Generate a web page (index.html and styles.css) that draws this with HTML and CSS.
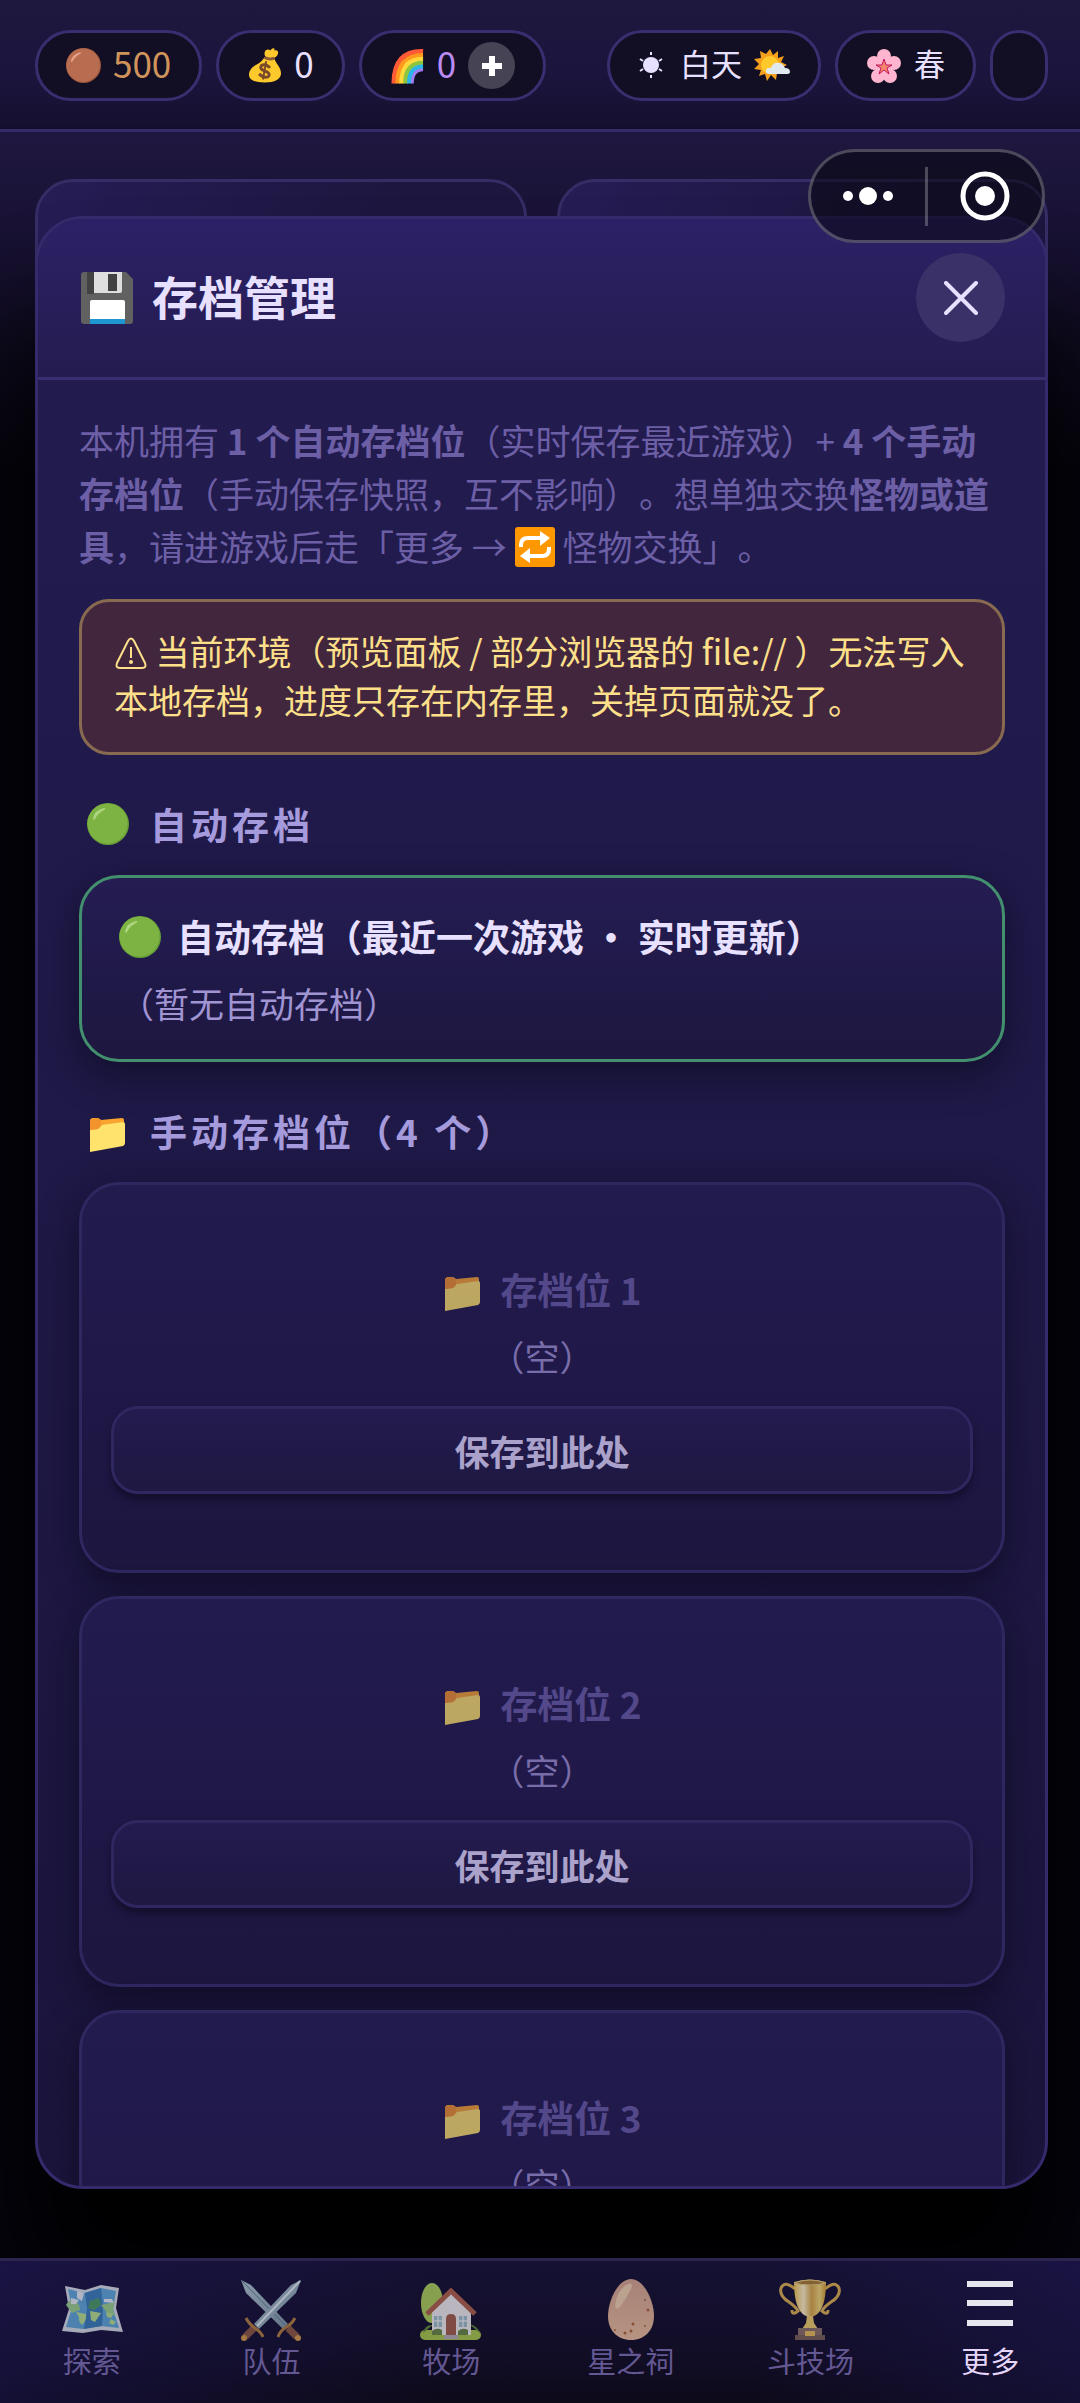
FILE: index.html
```html
<!DOCTYPE html>
<html lang="zh-CN">
<head>
    <meta charset="UTF-8">
    <meta name="viewport" content="width=device-width, initial-scale=1">
    <title>存档管理</title>
    <link rel="stylesheet" href="styles.css">
</head>
<body>
    <!-- Shared icons -->
    <svg class="icon-defs" aria-hidden="true">
        <defs>
            <linearGradient id="swordBlade" x1="0" y1="0" x2="1" y2="1">
                <stop offset="0" stop-color="#b4cad4"/>
                <stop offset="1" stop-color="#7e99a6"/>
            </linearGradient>
            <linearGradient id="cupGold" x1="0" y1="0" x2="1" y2="0">
                <stop offset="0" stop-color="#f0c552"/>
                <stop offset="0.3" stop-color="#fff3c8"/>
                <stop offset="0.55" stop-color="#d8a848"/>
                <stop offset="0.8" stop-color="#f2d878"/>
                <stop offset="1" stop-color="#d8a030"/>
            </linearGradient>
            <linearGradient id="eggShell" x1="0" y1="0" x2="0" y2="1">
                <stop offset="0" stop-color="#d8a890"/>
                <stop offset="1" stop-color="#eec0a0"/>
            </linearGradient>
            <symbol id="icon-folder" viewBox="0 0 42 42">
                <path d="M3 39V11q0-2 2-3h6l3 2 21-2q2 0 2 2v6L8 38z" fill="#f9a52f"/>
                <path d="M3 42V20l8-1 4-4 21-3q2 0 2 2v19q0 2-2 3z" fill="#ffe36c"/>
                <path d="M3 20v-9q0-2 1-2l7-1 3 2v6l-3 3z" fill="#f2932c"/>
            </symbol>
            <symbol id="icon-green" viewBox="0 0 42 42">
                <circle cx="21" cy="21" r="21" fill="#689f38"/>
                <circle cx="20.500" cy="20.500" r="20" fill="#7cb342"/>
                <path d="M6 15Q8 7 17 5q3 0 0 2-6 3-9 9-2 2-2-1z" fill="#aed581"/>
            </symbol>
        </defs>
    </svg>

    <div class="app">
        <header class="topbar">
            <div class="pill-group">
                <div class="pill coin">
                    <svg width="35" height="35" viewBox="0 0 42 42">
                        <circle cx="21" cy="21" r="21" fill="#a1583f"/>
                        <circle cx="20.500" cy="20.500" r="20" fill="#b96d50"/>
                        <path d="M6 15Q8 7 17 5q3 0 0 2-6 3-9 9-2 2-2-1z" fill="#e8a088"/>
                    </svg>
                    <span>500</span>
                </div>
                <div class="pill">
                    <svg width="35" height="36" viewBox="0 0 36 36">
                        <path d="M19 9q-2-4 0-7 3-2 5 0 2-3 4-2 1 0 0 2 4-1 4 2 0 4-5 6z" fill="#fdc92c"/>
                        <path d="M18 9q5-2 10 1 1 3 3 6 4 5 4 10-1 9-17 9T2 27q0-6 7-10 6-3 9-8z" fill="#fdc92c"/>
                        <path d="M18 9q5 3 10 1" stroke="#8a5a3a" stroke-width="3" fill="none"/>
                        <g transform="rotate(10 18 23)" fill="none" stroke="#7a4a2b">
                            <path d="M23 19q-5-4-9-1-2 4 4 5 7 1 5 5-4 3-10-1" stroke-width="3"/>
                            <path d="M18 13v19" stroke-width="2"/>
                        </g>
                    </svg>
                    <span>0</span>
                </div>
                <div class="pill gem">
                    <svg width="35" height="36" viewBox="0 0 36 36">
                        <g fill="none" stroke-width="5">
                            <path d="M4 36Q4 2 34 3" stroke="#ff5a36"/>
                            <path d="M8 36Q8 7 34 7" stroke="#ff9a1f"/>
                            <path d="M12 36Q12 11 34 11" stroke="#ffd93b"/>
                            <path d="M16 36Q16 15 34 15" stroke="#8cc63f"/>
                            <path d="M20 36Q20 19 34 19" stroke="#2bb5e8"/>
                            <path d="M23 36Q23 22 34 22" stroke="#a07cf0" stroke-width="3"/>
                        </g>
                    </svg>
                    <span>0</span>
                    <button type="button" class="add-btn" aria-label="添加">
                        <svg width="20" height="20" viewBox="0 0 20 20"><path d="M10 0v20M0 10h20" stroke="#fff" stroke-width="6"/></svg>
                    </button>
                </div>
            </div>
            <div class="pill-group status">
                <div class="pill">
                    <svg width="30" height="30" viewBox="0 0 30 30">
                        <circle cx="13" cy="14" r="8" fill="#e8e0ff"/>
                        <path d="M13 1v3M13 24v3M2 8l3 2M21 18l3 2M24 8l-3 2M5 18l-3 2" stroke="#e8e0ff" stroke-width="2"/>
                    </svg>
                    <span>白天</span>
                    <svg width="36" height="36" viewBox="0 0 36 36">
                        <path d="M16 1l3 6 5-4v7l6-2-3 6 6 3-6 3 3 6-7-1-1 7-5-5-4 6-2-7-6 2 2-6-7-1 5-5-5-5 7-1-1-7 6 3z" fill="#f5a01d"/>
                        <circle cx="16" cy="17" r="9" fill="#ffc92c"/>
                        <path d="M16 26q-5 0-4-4 1-3 5-2 2-6 8-5 4 0 6 5 5 0 5 4 0 2-4 2z" fill="#dfe9ef"/>
                    </svg>
                </div>
                <div class="pill">
                    <svg width="36" height="36" viewBox="0 0 36 36">
                        <g fill="#ffb4cf">
                            <circle cx="18" cy="8" r="7"/>
                            <circle cx="28" cy="15" r="7"/>
                            <circle cx="24" cy="28" r="7"/>
                            <circle cx="12" cy="28" r="7"/>
                            <circle cx="8" cy="15" r="7"/>
                            <circle cx="18" cy="19" r="9"/>
                        </g>
                        <path d="M18 11l2 6 6 0-5 3 2 6-5-4-5 4 2-6-5-3 6 0z" fill="#f5876e" stroke="#c2185b" stroke-width="1"/>
                    </svg>
                    <span>春</span>
                </div>
                <div class="pill pill-empty"></div>
            </div>
        </header>

        <main class="stage">
            <div class="back-cards">
                <div class="back-card"></div>
                <div class="back-card"></div>
            </div>

            <section class="modal" role="dialog" aria-labelledby="modalTitle">
                <div class="modal-header">
                    <h1 class="modal-title" id="modalTitle">
                        <svg width="54" height="54" viewBox="0 0 54 54">
                            <path d="M4 1h42l7 7v42q0 3-3 3H4q-3 0-3-3V4q0-3 3-3z" fill="#616161"/>
                            <path d="M7 1h7v22H7z" fill="#424242"/>
                            <path d="M14 1h28v19q0 2-2 2H14z" fill="#dedede"/>
                            <path d="M28 3h9v17h-9z" fill="#424242"/>
                            <path d="M10 53V31q0-2 2-2h31q2 0 2 2v22z" fill="#fff"/>
                            <path d="M10 48h35v5H10z" fill="#1e96d2"/>
                        </svg>
                        <span>存档管理</span>
                    </h1>
                    <button type="button" class="close-btn" aria-label="关闭">
                        <svg width="34" height="34" viewBox="0 0 34 34"><path d="M2 2l30 30M32 2L2 32" stroke="#e8e0ff" stroke-width="4" stroke-linecap="round"/></svg>
                    </button>
                </div>

                <div class="modal-body">
                    <p class="intro">本机拥有 <b>1 个自动存档位</b>（实时保存最近游戏）+ <b>4 个手动存档位</b>（手动保存快照，互不影响）。想单独交换<b>怪物或道具</b>，请进游戏后走「更多 → <svg class="inline-icon" width="40" height="40" viewBox="0 0 40 40"><rect width="40" height="40" rx="3" fill="#ff9800"/><path d="M6 20v-2q0-7 7-7h14M34 20v2q0 7-7 7H13" stroke="#fff" stroke-width="4" fill="none"/><path d="M25 4l10 7-10 8zM15 21L5 29l10 7z" fill="#fff"/></svg> 怪物交换」。</p>

                    <div class="warning">
                        <svg class="inline-icon" width="34" height="34" viewBox="0 0 34 34"><path d="M14 4q3-5 6 0l11 22q2 5-3 5H6q-5 0-3-5z" fill="none" stroke="#ffe08a" stroke-width="2"/><path d="M17 10v11" stroke="#ffe08a" stroke-width="2"/><circle cx="17" cy="25" r="2" fill="#ffe08a"/></svg> 当前环境（预览面板 / 部分浏览器的 file:// ）无法写入本地存档，进度只存在内存里，关掉页面就没了。
                    </div>

                    <h2 class="section-title">
                        <svg width="42" height="42"><use href="#icon-green"/></svg>
                        <span>自动存档</span>
                    </h2>
                    <div class="card auto-card">
                        <h3 class="card-title">
                            <svg width="42" height="42"><use href="#icon-green"/></svg>
                            <span>自动存档（最近一次游戏 · 实时更新）</span>
                        </h3>
                        <p class="card-meta">（暂无自动存档）</p>
                    </div>

                    <h2 class="section-title">
                        <svg width="42" height="42"><use href="#icon-folder"/></svg>
                        <span>手动存档位（4 个）</span>
                    </h2>
                    <div class="slot-list">
                        <div class="card slot">
                            <h3 class="card-title">
                                <svg width="42" height="42"><use href="#icon-folder"/></svg>
                                <span>存档位 1</span>
                            </h3>
                            <p class="card-meta">（空）</p>
                            <button type="button" class="save-btn">保存到此处</button>
                        </div>
                        <div class="card slot">
                            <h3 class="card-title">
                                <svg width="42" height="42"><use href="#icon-folder"/></svg>
                                <span>存档位 2</span>
                            </h3>
                            <p class="card-meta">（空）</p>
                            <button type="button" class="save-btn">保存到此处</button>
                        </div>
                        <div class="card slot">
                            <h3 class="card-title">
                                <svg width="42" height="42"><use href="#icon-folder"/></svg>
                                <span>存档位 3</span>
                            </h3>
                            <p class="card-meta">（空）</p>
                            <button type="button" class="save-btn">保存到此处</button>
                        </div>
                    </div>
                </div>
            </section>
        </main>

        <nav class="tabbar">
            <a href="#" class="tab">
                <svg width="62" height="62" viewBox="0 0 62 62">
                    <path d="M4 7l20 4 16-5 18 3-3 20 7 24-22-2-18 3-21-2 7-22z" fill="#d7dde3"/>
                    <path d="M7 10l16 4 17-5 15 3-3 18 6 19-18-2-18 3-17-2 6-19z" fill="#5fa8d8"/>
                    <path d="M24 14l16-5 2 20-1 18-18 3 3-20z" fill="#3b7fb8"/>
                    <path d="M5 26q4-7 10-4 4 4 4 9l-8 3zM40 26l14-3-2 8 2 6-8-3z" fill="#9bd18b"/>
                    <path d="M15 33l10 2q1 6-4 11-4-4-3-8zM29 32l11 2-6 9-4-2zM45 33l7 2-2 4-4-1zM50 40l5 3-3 3-4-2z" fill="#b9e08c"/>
                    <path d="M29 22l9-3 2 7-7 5-6-2z" fill="#4c9d65"/>
                    <path d="M16 12l7 2-2 8-5-3zM10 19l8 2-3 4-5 0zM43 20l8 0 2 4-10-1z" fill="#e3edf2"/>
                </svg>
                <span>探索</span>
            </a>
            <a href="#" class="tab">
                <svg width="62" height="62" viewBox="0 0 62 62">
                    <path d="M1 1l10 5 37 39-5 5L6 14z" fill="url(#swordBlade)"/>
                    <path d="M1 1l45 46" stroke="#60808f" stroke-width="1"/>
                    <path d="M48 49l9 9" stroke="#8d5a42" stroke-width="7"/>
                    <circle cx="58" cy="59" r="3" fill="#d69c4e"/>
                    <path d="M38 58q2-6 7-9 7-4 10-10" stroke="#b5803f" stroke-width="3" fill="none"/>
                    <path d="M61 1l-5 13-37 36-5-5L51 6z" fill="url(#swordBlade)"/>
                    <path d="M60 2L17 47" stroke="#e3eef3" stroke-width="2"/>
                    <path d="M14 49l-9 9" stroke="#8d5a42" stroke-width="7"/>
                    <circle cx="4" cy="59" r="3" fill="#d69c4e"/>
                    <path d="M6 39q3 6 9 10 6 4 8 9" stroke="#b5803f" stroke-width="3" fill="none"/>
                </svg>
                <span>队伍</span>
            </a>
            <a href="#" class="tab">
                <svg width="62" height="62" viewBox="0 0 62 62">
                    <ellipse cx="12" cy="24" rx="11" ry="20" fill="#aed15c"/>
                    <rect x="0" y="51" width="61" height="10" rx="5" fill="#aac94c"/>
                    <path d="M3 54q2-9 10-8M49 45q9 2 11 9z" fill="#5f8a37"/>
                    <path d="M12 31l19-18 20 18v25H12z" fill="#f2eef0"/>
                    <path d="M7 35l24-23 24 23" fill="none" stroke="#b0624c" stroke-width="5"/>
                    <path d="M26 56V40q0-5 5-5t5 5v16z" fill="#a4604c"/>
                    <path d="M14 37h8v11h-8zM39 37h8v11h-8z" fill="#9fbfcc"/>
                    <path d="M18 37v11M14 42h8M43 37v11M39 42h8" stroke="#fff" stroke-width="1"/>
                    <path d="M12 56v-4q5-4 10-1v5zM38 56v-4q5-4 10-1v5z" fill="#6a8a4a"/>
                    <path d="M25 56h12l2 4H23z" fill="#b9aebb"/>
                </svg>
                <span>牧场</span>
            </a>
            <a href="#" class="tab">
                <svg width="62" height="62" viewBox="0 0 62 62">
                    <path d="M31 0c13 0 23 22 23 37 0 14-9 24-23 24S8 51 8 37C8 22 18 0 31 0z" fill="url(#eggShell)"/>
                    <path d="M15 27Q17 10 28 5q6-2 3 5-5 10-11 18-4 4-5-1z" fill="#f3d3b0"/>
                    <g fill="#b0653e">
                        <circle cx="48" cy="31" r="1.500"/><circle cx="45" cy="21" r="1"/><circle cx="33" cy="45" r="1.500"/>
                        <circle cx="31" cy="52" r="1.500"/><circle cx="25" cy="54" r="1.500"/><circle cx="45" cy="47" r="1"/><circle cx="15" cy="51" r="1"/>
                    </g>
                </svg>
                <span>星之祠</span>
            </a>
            <a href="#" class="tab">
                <svg width="62" height="62" viewBox="0 0 62 62">
                    <path d="M16 10Q6 1 2 9q-2 8 8 14 7 5 9 9-6 5-6-1M46 10Q56 1 60 9q2 8-8 14-7 5-9 9 6 5 6-1" fill="none" stroke="#dcb250" stroke-width="3"/>
                    <path d="M15 3q16-5 32 0 0 26-10 33-6 4-12 0Q15 29 15 3z" fill="url(#cupGold)"/>
                    <path d="M15 4q16-6 32 0-16 4-32 0z" fill="#a87c34" stroke="#e8cc7c" stroke-width="1"/>
                    <path d="M28 37h6l1 7 4 6H23l4-6z" fill="#f0cc6c"/>
                    <path d="M19 49h24v7H19z" fill="#8c7168"/>
                    <path d="M16 56h30v5H16z" fill="#7a6058"/>
                    <path d="M26 52h10v5H26z" fill="#e9bd5a"/>
                </svg>
                <span>斗技场</span>
            </a>
            <a href="#" class="tab active">
                <svg width="62" height="62" viewBox="0 0 62 62"><path d="M8 5h46M8 24h46M8 44h46" stroke="#e6e6ee" stroke-width="6"/></svg>
                <span>更多</span>
            </a>
        </nav>

        <div class="capsule">
            <button type="button" aria-label="菜单">
                <svg width="52" height="20" viewBox="0 0 52 20" fill="#fff"><circle cx="6" cy="10" r="5"/><circle cx="26" cy="10" r="9"/><circle cx="46" cy="10" r="5"/></svg>
            </button>
            <button type="button" aria-label="退出">
                <svg width="50" height="50" viewBox="0 0 50 50"><circle cx="25" cy="25" r="22" fill="none" stroke="#fff" stroke-width="5"/><circle cx="25" cy="25" r="10" fill="#fff"/></svg>
            </button>
        </div>
    </div>
</body>
</html>
```

FILE: styles.css
```css
* {
    box-sizing: border-box;
}

body {
    margin: 0;
    background-color: #05040c;
    color: #e8e0ff;
    font-family: "Noto Sans CJK SC", sans-serif;
    text-spacing-trim: space-all;
}

h1, h2, h3, p {
    margin: 0;
}

button {
    border: none;
    padding: 0;
    font-family: inherit;
    cursor: pointer;
}

svg {
    flex: none;
}

.icon-defs {
    position: absolute;
    width: 0;
    height: 0;
}

.app {
    position: relative;
    display: flex;
    flex-direction: column;
    height: 100vh;
    overflow: hidden;
}

/* Top bar */
.topbar {
    display: flex;
    justify-content: space-between;
    align-items: flex-start;
    padding: 30px 32px 28px 35px;
    background: linear-gradient(#1e183f, #1b153d 60%, #150f2e);
    border-bottom: 3px solid #352b68;
}

.pill-group {
    display: flex;
    gap: 14px;
}

.pill {
    display: flex;
    align-items: center;
    gap: 12px;
    height: 71px;
    padding: 0 28px;
    border: 3px solid #392f70;
    border-radius: 36px;
    background-color: #120e24;
    font-size: 35px;
}

.pill span {
    padding-bottom: 6px;
}

.status .pill {
    font-size: 31px;
}

.pill-empty {
    width: 58px;
    padding: 0;
}

.coin {
    color: #d0935a;
}

.gem {
    color: #b98af0;
}

.add-btn {
    display: flex;
    align-items: center;
    justify-content: center;
    width: 47px;
    height: 47px;
    border-radius: 50%;
    background-color: #464354;
}

/* Page behind the dialog */
.stage {
    position: relative;
    flex: 1;
    padding: 47px 32px 0 35px;
    background: linear-gradient(#1f173f, #1a1337 80px, #0f0b20 200px, #05040c 340px);
}

.back-cards {
    display: grid;
    grid-template-columns: 1fr 1fr;
    gap: 30px;
}

.back-card {
    height: 220px;
    border: 3px solid #362d66;
    border-radius: 38px;
    background: linear-gradient(120deg, #251d55, #1d163f 60%);
}

/* Dialog */
.modal {
    position: absolute;
    top: 84px;
    right: 32px;
    bottom: 69px;
    left: 35px;
    display: flex;
    flex-direction: column;
    overflow: hidden;
    border: 3px solid #352b6c;
    border-radius: 48px;
    background: linear-gradient(#241c50, #201a4b 30%, #1b153c);
    box-shadow: 0 100px 100px #000;
}

.modal-header {
    display: flex;
    justify-content: space-between;
    align-items: center;
    padding: 34px 40px 35px;
    border-bottom: 3px solid #382e70;
    background: linear-gradient(#2c2166, #241c50);
}

.modal-title {
    display: flex;
    align-items: center;
    gap: 18px;
    padding-left: 2px;
    font-size: 46px;
    line-height: 64px;
}

.modal-title span {
    padding-bottom: 6px;
}

.close-btn {
    display: flex;
    align-items: center;
    justify-content: center;
    width: 89px;
    height: 89px;
    border-radius: 50%;
    background-color: #3a3168;
}

.modal-body {
    flex: 1;
    min-height: 0;
    overflow-y: auto;
    scrollbar-width: none;
    padding: 33px 40px 35px 41px;
}

.intro {
    color: #6c5fa6;
    font-size: 35px;
    line-height: 53px;
}

.inline-icon {
    vertical-align: -6px;
}

.warning {
    margin-top: 27px;
    padding: 24px 32px 28px;
    border: 3px solid #876a4f;
    border-radius: 30px;
    background-color: #42263e;
    color: #ffe08a;
    font-size: 34px;
    line-height: 49px;
}

.section-title {
    display: flex;
    align-items: center;
    gap: 21px;
    margin: 41px 0 23px;
    padding-left: 8px;
    color: #a59adb;
    font-size: 37px;
    line-height: 56px;
    letter-spacing: 4px;
}

.card {
    padding: 30px 29px;
    border: 3px solid #2f2760;
    border-radius: 40px;
    background: linear-gradient(#221b4e, #1f1848 50%, #1d163f);
    box-shadow: 0 12px 36px rgba(10, 8, 24, 0.6);
}

.card-title {
    display: flex;
    align-items: center;
    gap: 16px;
    font-size: 37px;
    line-height: 57px;
}

.card-meta {
    margin-top: 11px;
    color: #a094d2;
    font-size: 35px;
    line-height: 53px;
}

.auto-card {
    padding-left: 37px;
    border-color: #43906f;
    background: linear-gradient(#251d52, #1f1948 60%, #1e173f);
}

.slot-list {
    display: flex;
    flex-direction: column;
    gap: 23px;
}

.slot {
    padding-top: 76px;
    padding-bottom: 76px;
    text-align: center;
}

.slot .card-title {
    justify-content: center;
    color: #53488a;
}

.slot .card-title svg {
    opacity: 0.7;
}

.slot .card-meta {
    color: #786da9;
}

.save-btn {
    display: block;
    width: 100%;
    height: 88px;
    margin-top: 24px;
    border: 3px solid #2f2760;
    border-radius: 27px;
    background: linear-gradient(#231b4e, #1e1842);
    box-shadow: 0 6px 6px rgba(18, 14, 40, 0.8);
    color: #aaa2cb;
    font-size: 35px;
    font-weight: bold;
}

/* Bottom tabs */
.tabbar {
    position: relative;
    display: grid;
    grid-template-columns: repeat(6, 1fr);
    padding: 18px 0 23px 2px;
    border-top: 3px solid #2c2550;
    background: linear-gradient(90deg, rgba(30, 24, 90, 0.4), transparent 40%, transparent 70%, rgba(30, 24, 90, 0.4)), linear-gradient(#151133, #120e28 60%, #0d0a1a);
}

.tab {
    display: flex;
    flex-direction: column;
    align-items: center;
    color: #645893;
    font-size: 29px;
    line-height: 39px;
    text-decoration: none;
}

.tab svg {
    opacity: 0.75;
}

.tab.active {
    color: #e6d6fa;
}

.tab.active svg {
    opacity: 1;
}

/* Floating menu capsule */
.capsule {
    position: absolute;
    top: 149px;
    right: 35px;
    display: flex;
    align-items: center;
    width: 237px;
    height: 94px;
    border: 3px solid rgba(255, 255, 255, 0.25);
    border-radius: 47px;
    background-color: rgba(10, 8, 20, 0.6);
}

.capsule button {
    display: flex;
    flex: 1;
    align-items: center;
    justify-content: center;
    height: 59px;
    background: none;
}

.capsule button + button {
    border-left: 3px solid rgba(255, 255, 255, 0.25);
}
```
